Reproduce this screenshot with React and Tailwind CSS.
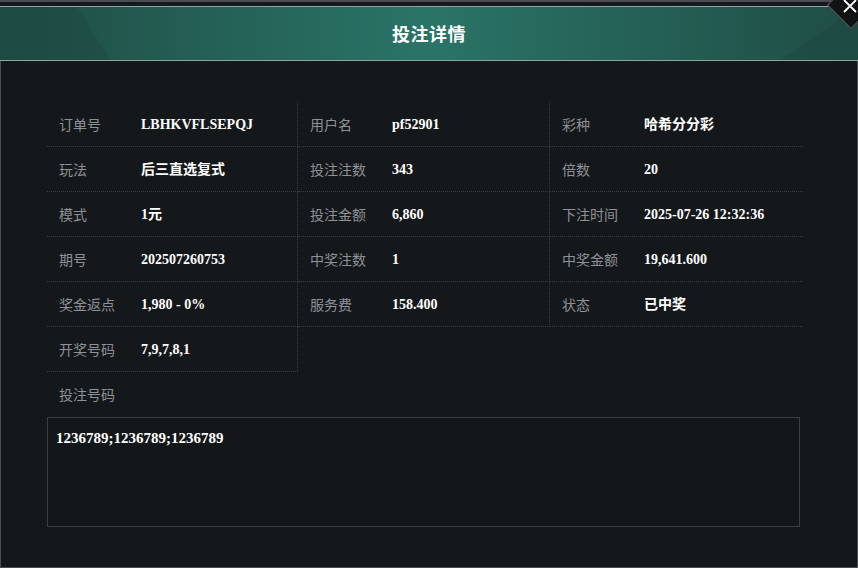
const rows = [
  [
    ['订单号', 'LBHKVFLSEPQJ'],
    ['用户名', 'pf52901'],
    ['彩种', '哈希分分彩'],
  ],
  [
    ['玩法', '后三直选复式'],
    ['投注注数', '343'],
    ['倍数', '20'],
  ],
  [
    ['模式', '1元'],
    ['投注金额', '6,860'],
    ['下注时间', '2025-07-26 12:32:36'],
  ],
  [
    ['期号', '202507260753'],
    ['中奖注数', '1'],
    ['中奖金额', '19,641.600'],
  ],
  [
    ['奖金返点', '1,980 - 0%'],
    ['服务费', '158.400'],
    ['状态', '已中奖'],
  ],
  [['开奖号码', '7,9,7,8,1']],
];

const labelFont = { fontFamily: '"Noto Sans CJK SC", "Noto Sans", sans-serif' };
const valueFont = { fontFamily: '"Liberation Serif", "Noto Sans CJK SC", serif' };

const Cell = ({ label, value, last }) => (
  <div
    className={`h-[45px] flex items-center pl-3 border-b border-dotted border-[#3a3e44] ${
      last ? '' : 'border-r'
    }`}
  >
    <span className="w-[82px] text-[14px] text-[#8e9196]" style={labelFont}>
      {label}
    </span>
    <span className="text-[14px] font-bold text-white" style={valueFont}>
      {value}
    </span>
  </div>
);

export default function App() {
  return (
    <div className="relative w-[858px] h-[568px] overflow-hidden bg-[#15181b]">
      {/* top strip */}
      <div className="h-[6px] border-t-2 border-[#4a4d51] bg-[#16181c]" />

      {/* header */}
      <div className="relative h-[55px] border-y border-[#8fa5a0] bg-linear-to-r from-[#1f4d45] via-[#2a7467] to-[#1f4d45] flex items-center justify-center overflow-hidden">
        <div className="absolute left-0 top-0 h-full w-[110px] bg-[#1c4840] [clip-path:polygon(0_0,70%_0,100%_100%,0_100%)] opacity-50" />
        <div className="absolute right-0 top-0 h-full w-[110px] bg-[#1c4840] [clip-path:polygon(30%_100%,100%_0,100%_100%)] opacity-50" />
        <h1
          className="relative text-[18px] font-bold text-white tracking-wide"
          style={labelFont}
        >
          投注详情
        </h1>
      </div>

      {/* close button */}
      <div className="absolute left-[834px] top-[-12px] w-[34px] h-[34px] rotate-45 bg-[#111214] border border-[#5a5d61]" />
      <svg
        className="absolute left-[843px] top-0"
        width="14"
        height="13"
        viewBox="0 0 14 13"
        fill="none"
        stroke="white"
        strokeWidth="1.8"
      >
        <path d="M1 0 L13 12 M13 0 L1 12" />
      </svg>

      {/* body */}
      <div className="h-[507px] border-x border-b border-[#4a4d51] pl-[46px] pt-[41px]">
        <div className="grid grid-cols-[251px_252px_253px] w-[756px]">
          {rows.map((row, i) =>
            row.map(([label, value], j) => (
              <Cell
                key={`${i}-${j}`}
                label={label}
                value={value}
                last={j === 2}
              />
            ))
          )}
        </div>

        <div className="h-[45px] flex items-center pl-3">
          <span className="text-[14px] text-[#8e9196]" style={labelFont}>
            投注号码
          </span>
        </div>

        <div className="w-[753px] h-[110px] border border-[#3a3e44] bg-[#14171a] px-2 pt-[9px]">
          <p className="text-[15px] font-bold text-white" style={valueFont}>
            1236789;1236789;1236789
          </p>
        </div>
      </div>
    </div>
  );
}
